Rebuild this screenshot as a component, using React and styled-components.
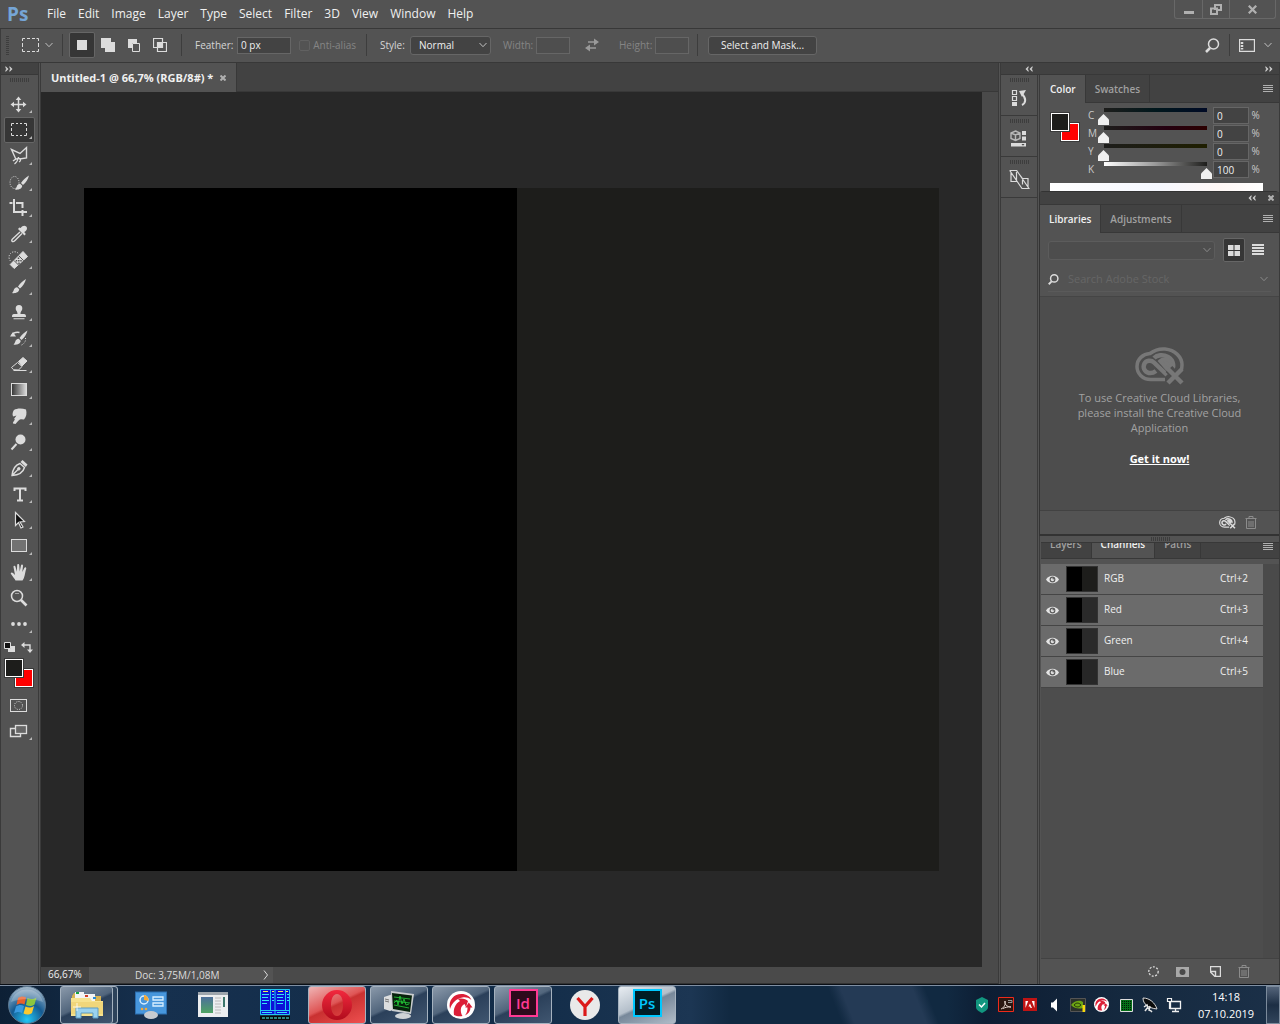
import React, { useState } from 'react';
import styled, { createGlobalStyle, css } from 'styled-components';

const GlobalStyle = createGlobalStyle`
    * {
        box-sizing: border-box;
    }

    body {
        margin: 0;
        background: #535353;
        color: #dcdcdc;
        font-family: "Open Sans", "Noto Sans", sans-serif;
        font-size: 10px;
        line-height: 14px;
    }

    button, input, select {
        margin: 0;
        padding: 0;
        border: 0;
        background: none;
        color: inherit;
        font: inherit;
    }

    svg {
        display: block;
        flex: none;
    }
`;

const Window = styled.div`
    display: flex;
    flex-direction: column;
    height: 100vh;
    overflow: hidden;
`;

/* ---------- menu bar ---------- */

const MenuBar = styled.header`
    display: flex;
    align-items: center;
    height: 29px;
    flex: none;
    padding-left: 7px;
    border-bottom: 1px solid #383838;
`;

const Logo = styled.div`
    width: 40px;
    color: #75a5d6;
    font-size: 19px;
    font-weight: 700;
    line-height: 24px;
`;

const Menu = styled.nav`
    display: flex;
    flex: 1;
    gap: 12px;
    font-size: 12px;
    color: #f0f0f0;
`;

const WindowControls = styled.div`
    display: flex;
    align-self: flex-start;
    height: 19px;
    margin-right: 4px;
    border: 1px solid #686868;
    border-top: 0;
    border-radius: 0 0 3px 3px;
`;

const WindowControl = styled.button`
    display: flex;
    align-items: center;
    justify-content: center;
    width: ${props => props.$wide ? 46 : 27}px;
    border-left: ${props => props.$first ? 0 : 1}px solid #686868;
`;

/* ---------- options bar ---------- */

const OptionsBar = styled.div`
    display: flex;
    align-items: center;
    height: 34px;
    flex: none;
    padding: 0 8px 1px 5px;
    border-left: 1px solid #3c3c3c;
    border-bottom: 1px solid #383838;
`;

const Grip = styled.div`
    flex: none;
    width: ${props => props.$vertical ? 3 : 19}px;
    height: ${props => props.$vertical ? 19 : 4}px;
    background: repeating-linear-gradient(
        ${props => props.$vertical ? '180deg' : '90deg'},
        #3d3d3d 0 1px, transparent 1px 2px
    );
`;

const ToolPreset = styled.button`
    display: flex;
    align-items: center;
    gap: 5px;
    margin: 0 9px;
`;

const Divider = styled.div`
    flex: none;
    width: 1px;
    height: 22px;
    margin-left: ${props => props.$gap || 0}px;
    background: #3d3d3d;
`;

const ModeGroup = styled.div`
    display: flex;
    margin: 0 8px 0 6px;
`;

const ModeButton = styled.button`
    display: flex;
    align-items: center;
    justify-content: center;
    width: 26px;
    height: 26px;
    flex: none;
    border-radius: 2px;
    ${props => props.$active && css`
        background: #363636;
        border: 1px solid #666;
    `}
`;

const Field = styled.label`
    display: flex;
    align-items: center;
    justify-content: space-between;
    flex: none;
    width: ${props => props.$width}px;
    margin-left: ${props => props.$gap || 13}px;
    color: ${props => props.$disabled ? '#858585' : '#d6d6d6'};
`;

const TextBox = styled.input`
    width: ${props => props.$width}px;
    height: 17px;
    padding: 0 3px;
    border: 1px solid #666;
    background: ${props => props.disabled ? '#4e4e4e' : '#434343'};
    color: #f0f0f0;
`;

const Checkbox = styled.input.attrs({ type: 'checkbox' })`
    appearance: none;
    width: 11px;
    height: 11px;
    border: 1px solid #616161;
    border-radius: 2px;
`;

const SelectBox = styled.span`
    display: flex;
    align-items: center;
    flex: none;
    width: ${props => props.$width}px;
    height: 19px;
    padding-right: 3px;
    border: 1px solid ${props => props.$dim ? '#5c5c5c' : '#666'};
    border-radius: 3px;
    background: ${props => props.$dim ? '#4d4d4d' : '#434343'};
    color: ${props => props.$dim ? '#858585' : '#f0f0f0'};
`;

const Select = styled.select`
    appearance: none;
    flex: 1;
    min-width: 0;
    padding-left: 8px;
    outline: 0;
`;

const SwapButton = styled.button`
    margin: 0 3px 0 15px;
`;

const MaskButton = styled.button`
    width: 109px;
    height: 19px;
    flex: none;
    margin-left: 10px;
    border: 1px solid #666;
    border-radius: 3px;
    background: #434343;
    color: #f0f0f0;
`;

const OptionsRight = styled.div`
    display: flex;
    align-items: center;
    gap: 9px;
    margin-left: auto;
`;

/* ---------- workspace ---------- */

const Workspace = styled.main`
    display: flex;
    flex: 1;
    min-height: 0;
`;

const Toolbox = styled.aside`
    display: flex;
    flex-direction: column;
    align-items: center;
    flex: none;
    width: 41px;
    border: solid #3a3a3a;
    border-width: 0 3px 0 1px;
    border-right-style: double;
`;

const CollapseBar = styled.div`
    display: flex;
    align-items: center;
    justify-content: space-between;
    width: 100%;
    height: 12px;
    flex: none;
    padding: 0 4px;
    border-bottom: 1px solid #383838;
    background: #424242;
`;

const ToolGrip = styled(Grip)`
    margin: 3px 0 9px;
`;

const ToolButton = styled.button`
    position: relative;
    display: flex;
    align-items: center;
    width: 31px;
    height: 26px;
    flex: none;
    padding-left: 2px;
    border: 1px solid ${props => props.$active ? '#666' : 'transparent'};
    border-radius: 2px;
    background: ${props => props.$active ? '#363636' : 'none'};

    &:after {
        content: '';
        position: absolute;
        right: 2px;
        bottom: 3px;
        border-left: 3px solid transparent;
        border-bottom: ${props => props.$single ? 0 : 3}px solid #b8b8b8;
    }
`;

const ColorMini = styled.div`
    display: flex;
    justify-content: space-between;
    width: 29px;
    margin: 5px 2px 0 0;
    flex: none;
`;

const ColorPair = styled.div`
    display: grid;
    grid-template: 10px 8px 10px / 10px 8px 10px;
    flex: none;
    margin: ${props => props.$margin || 0};
`;

const ColorWell = styled.button`
    border: 1px solid #fff;
    background: ${props => props.$color};
    outline: 1px solid #3a3a3a;
    grid-area: ${props => props.$back ? '2 / 2 / 4 / 4' : '1 / 1 / 3 / 3'};
`;

const Document = styled.section`
    display: flex;
    flex-direction: column;
    flex: 1;
    min-width: 0;
`;

const TabStrip = styled.div`
    display: flex;
    align-items: stretch;
    height: ${props => props.$height || 28}px;
    flex: none;
    background: #424242;
    border-bottom: 1px solid #383838;
`;

const Tab = styled.button`
    display: flex;
    align-items: center;
    padding: 0 9px;
    height: ${props => props.$active ? 'calc(100% + 1px)' : '100%'};
    border-right: 1px solid #383838;
    background: ${props => props.$active ? '#535353' : 'none'};
    color: ${props => props.$active ? '#f0f0f0' : '#a0a0a0'};
    font-weight: 600;
`;

const DocTab = styled(Tab)`
    justify-content: space-between;
    width: 196px;
    padding: 0 10px;
    font-size: 11px;
    font-weight: 700;
`;

const CanvasRow = styled.div`
    display: flex;
    flex: 1;
    min-height: 0;
`;

const Canvas = styled.div`
    display: flex;
    align-items: center;
    justify-content: center;
    flex: 1;
    min-width: 0;
    background: #282828;
`;

const Artwork = styled.div`
    width: 91%;
    max-width: 855px;
    aspect-ratio: 855 / 683;
    background: linear-gradient(90deg, #000 50.6%, #1d1d1b 50.6%);
`;

const ScrollTrack = styled.div`
    width: 16px;
    flex: none;
    background: #4a4a4a;
`;

const StatusBar = styled.footer`
    display: flex;
    height: 17px;
    flex: none;
    background: #4a4a4a;
    border-bottom: 1px solid #333;
`;

const Zoom = styled.div`
    width: 48px;
    padding-left: 7px;
    background: #434343;
    color: #f0f0f0;
`;

const DocInfo = styled.button`
    display: flex;
    align-items: center;
    justify-content: space-between;
    width: 184px;
    padding: 0 4px 0 46px;
    background: #535353;
`;

const SideDock = styled.aside`
    display: flex;
    flex-direction: column;
    flex: none;
    width: 282px;
    border: solid #3a3a3a;
    border-width: 0 1px 0 3px;
    border-left-style: double;
`;

const SideHeader = styled(CollapseBar)`
    padding: 0 6px 0 24px;
`;

const SideBody = styled.div`
    display: flex;
    flex: 1;
    min-height: 0;
`;

const IconStrip = styled.div`
    width: 39px;
    flex: none;
    border-right: 3px double #3a3a3a;
`;

const StripButton = styled.button`
    display: flex;
    flex-direction: column;
    align-items: center;
    gap: 5px;
    width: 100%;
    height: 41px;
    padding: 3px 0 0 1px;
    border-bottom: 1px solid #3a3a3a;
`;

const Panels = styled.div`
    display: flex;
    flex-direction: column;
    flex: 1;
    min-width: 0;
`;

const PanelMenu = styled.button`
    align-self: ${props => props.$top ? 'flex-start' : 'auto'};
    margin: 0 6px 0 auto;
`;

/* ---------- color panel ---------- */

const ColorPanel = styled.section`
    height: 116px;
    flex: none;
    margin-left: 1px;
    overflow: hidden;
`;

const ColorBody = styled.div`
    display: flex;
    align-items: flex-start;
    padding: 4px 0 0 10px;
`;

const Channels = styled.div`
    display: grid;
    grid-template-columns: 10px 115px 36px 12px;
    grid-auto-rows: 18px;
    margin-left: 9px;
`;

const ChannelName = styled.label`
    color: #c8c8c8;
    line-height: 16px;
`;

const InkSlider = styled.input.attrs({ type: 'range' })`
    appearance: none;
    width: 114px;
    height: 18px;
    background: ${props => props.$ramp} 6px 1px / 103px 4px no-repeat;

    &::-webkit-slider-thumb {
        appearance: none;
        width: 11px;
        height: 11px;
        margin-top: 7px;
        background: #f0f0f0;
        clip-path: polygon(50% 0, 100% 50%, 100% 100%, 0 100%, 0 50%);
    }
`;

const Spectrum = styled.div`
    height: 9px;
    margin: 4px 16px 0 9px;
    background: linear-gradient(90deg, #fff, #f6f8ff 50%, #fff8f6 80%, #fff);
`;

/* ---------- libraries panel ---------- */

const LibrariesPanel = styled.section`
    display: flex;
    flex-direction: column;
    height: 345px;
    flex: none;
    margin-left: -1px;
    border: 1px solid #333;
    border-right: 0;
    border-bottom: 2px solid #333;
    border-radius: 4px 4px 0 0;
    background: #4d4d4d;
`;

const FloatBar = styled.div`
    display: flex;
    align-items: center;
    justify-content: flex-end;
    gap: 12px;
    height: 13px;
    flex: none;
    padding-right: 5px;
    background: #424242;
    border-bottom: 1px solid #383838;
`;

const LibraryTools = styled.div`
    flex: none;
    height: 64px;
    padding: 5px 8px 0;
    background: #535353;
    border-bottom: 1px solid #454545;
`;

const ToolRow = styled.div`
    display: flex;
    align-items: center;
    gap: 2px;
`;

const LibrarySelect = styled(SelectBox)`
    margin-right: 6px;
`;

const ViewButton = styled(ModeButton)`
    width: 22px;
    height: 24px;
`;

const SearchRow = styled.label`
    display: flex;
    align-items: center;
    gap: 9px;
    height: 25px;
    margin-top: 5px;
    padding-right: 3px;
    border-bottom: 1px solid #5a5a5a;
`;

const SearchInput = styled.input`
    flex: 1;
    min-width: 0;
    font-size: 11px;
    outline: 0;

    &::placeholder {
        color: #666;
    }
`;

const EmptyState = styled.div`
    display: flex;
    flex-direction: column;
    align-items: center;
    flex: 1;
    padding-top: 50px;
    color: #a2a2a2;
    font-size: 11px;
    line-height: 15px;
    text-align: center;
`;

const EmptyText = styled.p`
    width: 170px;
    margin: 5px 0 16px;
`;

const GetLink = styled.a`
    color: #fff;
    font-weight: 700;
`;

const PanelFooter = styled.div`
    display: flex;
    align-items: center;
    justify-content: flex-end;
    gap: ${props => props.$gap}px;
    height: ${props => props.$height}px;
    flex: none;
    padding-right: ${props => props.$right}px;
    border-top: 1px solid #424242;
    background: #535353;
`;

const FooterButton = styled.button`
    display: flex;
    margin-left: ${props => props.$space || 0}px;
`;

/* ---------- channels panel ---------- */

const ChannelsPanel = styled.section`
    display: flex;
    flex-direction: column;
    flex: 1;
    min-height: 0;
    margin-left: 1px;
`;

const SplitGrip = styled.div`
    display: flex;
    justify-content: center;
    align-items: center;
    height: 7px;
    flex: none;
    border-bottom: 1px solid #383838;
`;

const ClippedTabs = styled.div`
    display: flex;
    align-items: flex-end;
    height: 16px;
    flex: none;
    overflow: hidden;
    background: #424242;
    border-bottom: 1px solid #383838;
`;

const ClippedTab = styled(Tab)`
    height: 28px;
    flex: none;
`;

const ChannelArea = styled.div`
    flex: 1;
    margin-top: 5px;
    padding-right: 16px;
    background: linear-gradient(90deg, transparent calc(100% - 16px), #4a4a4a calc(100% - 16px)), #4d4d4d;
`;

const ChannelList = styled.ul`
    margin: 0;
    padding: 0;
    list-style: none;
`;

const ChannelRow = styled.li`
    display: flex;
    align-items: center;
    height: 31px;
    padding: 0 15px 0 5px;
    border-bottom: 1px solid #454545;
    background: #6b6b6b;
    color: #f0f0f0;
`;

const Thumb = styled.div`
    width: 32px;
    height: 26px;
    margin: 0 6px 0 7px;
    border: 1px solid #333;
    background: linear-gradient(90deg, #000 50%, ${props => props.$tone} 50%);
`;

const RowText = styled.span`
    padding-bottom: 3px;
    margin-left: ${props => props.$end ? 'auto' : 0};
`;

/* ---------- taskbar ---------- */

const Taskbar = styled.footer`
    display: flex;
    align-items: center;
    flex: none;
    height: 40px;
    border-top: 1px solid #0a0f16;
    box-shadow: inset 0 1px #7f8fa3;
    background:
        linear-gradient(68deg, transparent 65%, #22385344 65.3%, #243a55 66%, #243a55 71.5%, transparent 72.5%),
        linear-gradient(90deg, #0d2035, #16304e 12%, #122c48 40%, #1c3653 54%, #112941 57%, #112941 74%, #0d1d33 77%, #15293f 88%, #1b3048);
`;

const StartButton = styled.button`
    margin: 0 14px 0 8px;
`;

const taskStates = {
    idle: 'none',
    open: 'linear-gradient(155deg, #8a99aa, #51657c 45%, #2b405a 50%, #405670)',
    alert: 'linear-gradient(155deg, #efb5b5, #df5555 45%, #c93131 50%, #ef5050)',
    active: 'linear-gradient(155deg, #e8edf2, #b4bfca 45%, #77889a 50%, #b0bcc8)',
};

const TaskButton = styled.button`
    display: flex;
    align-items: center;
    justify-content: center;
    width: 58px;
    height: 38px;
    flex: none;
    margin-right: 4px;
    border: 1px solid ${props => props.$state === 'idle' ? 'transparent' : '#a5b2bf'};
    border-radius: 3px;
    background: ${props => taskStates[props.$state]};
    ${props => props.$stacked && css`
        box-shadow: inset -4px 0 #2d435b, inset -5px 0 #a5b2bf;
        padding-right: 5px;
    `}
`;

const Tray = styled.div`
    display: flex;
    align-items: center;
    gap: 8px;
    margin-left: auto;
`;

const Clock = styled.time`
    width: 64px;
    margin-left: 4px;
    color: #fff;
    font-size: 11px;
    line-height: 17px;
    text-align: center;
`;

const ShowDesktop = styled.button`
    width: 14px;
    height: 38px;
    border: 1px solid #7b8a9b;
    background: linear-gradient(#54647a, #1c2e44 50%, #31445b);
`;

/* ---------- icons ---------- */

const Icon = ({ size = 16, w, h, box, children, ...rest }) => (
    <svg
        width={w || size}
        height={h || size}
        viewBox={box || `0 0 ${w || size} ${h || size}`}
        fill="none"
        stroke="#dcdcdc"
        aria-hidden="true"
        {...rest}
    >
        {children}
    </svg>
);

const Chevron = ({ color = '#c0c0c0' }) => (
    <Icon w={8} h={6} stroke={color}><path d="M.5 1 4 4.7 7.5 1" /></Icon>
);

const DoubleArrow = ({ left }) => (
    <Icon w={8} h={6} stroke="none" fill="#d0d0d0">
        <path d={left ? 'M3.500 0v2L2.500 3l1 1v2L.5 3zM7.500 0v2L6.500 3l1 1v2l-3-3z' : 'M.5 0v2l1 1-1 1v2l3-3zM4.500 0v2l1 1-1 1v2l3-3z'} />
    </Icon>
);

const Burger = () => (
    <Icon w={10} h={8} stroke="#b0b0b0"><path d="M0 .5h10M0 2.500h10M0 4.500h10M0 6.500h10" /></Icon>
);

const Cross = ({ size = 6, width = 2, color = '#b0b0b0' }) => (
    <Icon size={size} box="0 0 6 6" stroke={color} strokeWidth={width}><path d="M.5.5l5 5M5.500.5l-5 5" /></Icon>
);

const Magnifier = ({ size = 15 }) => (
    <Icon size={size} box="0 0 15 15" strokeWidth={size > 12 ? 1.5 : 2}>
        <circle cx="8.500" cy="6" r="5" /><path d="M5 10 1 14" strokeWidth="2.500" />
    </Icon>
);

const Trash = () => (
    <Icon w={12} h={13} stroke="#8c8c8c">
        <path d="M.5 2.500h11M4 2V.5h4V2M1.500 3v9.500h9V3M4 5v6M6 5v6M8 5v6" />
    </Icon>
);

const CloudShape = ({ size, color, bg }) => (
    <Icon w={size} h={Math.round(size * 0.76)} box="0 0 50 38" stroke={color} strokeWidth="3.500">
        <path d="M16 32.500C7 32.500 2 26 2 19.500 2 12 8 7 15 6.500 19 3.500 24 1.500 30 2c10 1 17 8 17 16 0 5-2 9-5 11M16 32.500h14" />
        <path d="M32 28 19 15.500c-3-3-8-2-9.500 1-2 4 0 8.500 4.500 9.500 3 .5 5-.5 7-2M19 11c3-3 9-4 14-1 6 3.500 7 11 2 15" strokeWidth="4.500" />
        <path d="M25 14c3-3 8-2 10 1 2 4 0 7-3 7z" fill={color} />
        <path d="M34 22l12 13M46 22 34 35" stroke={bg} strokeWidth="9" />
        <path d="M33 22l14 14M47 22 33 36" strokeWidth="4.500" />
    </Icon>
);

const Eye = () => (
    <Icon w={13} h={9} stroke="none">
        <path d="M0 4.500C3-.5 10-.5 13 4.500 10 9.500 3 9.500 0 4.500z" fill="#e4e4e4" />
        <circle cx="6.500" cy="4.500" r="2.900" fill="#5a5a5a" />
        <circle cx="6.500" cy="4.500" r="1.700" fill="#e4e4e4" />
        <circle cx="7.200" cy="3.700" r=".8" fill="#555" />
    </Icon>
);

const brushShape = (
    <path d="M20.500 4.500c-3 1.500-6 4.500-8 7.500l2 2c3-2.500 5-5.500 6-9.500zM11.700 12.800c-2 .2-3 1.200-3.500 3-.3 1.300-1 2-1.700 2.700 3 .8 7-.5 7.200-3.700z" fill="#dcdcdc" stroke="none" />
);

const tools = [
    { name: 'Move', art: (
        <>
            <path d="M11.500 7v11M6 12.500h11" strokeWidth="1.500" />
            <path d="M11.500 4.500 14.300 8H8.700zM11.500 20.500 8.700 17h5.600zM3.500 12.500 7 9.700v5.600zM19.500 12.500 16 9.700v5.600z" fill="#dcdcdc" stroke="none" />
        </>
    ) },
    { name: 'Rectangular Marquee', art: <path d="M4.500 8V5.500H7M9 5.500h2M13 5.500h2M17 5.500h2.500V8M19.500 10v3M19.500 15v2.500H17M15 17.500h-2M11 17.500H9M7 17.500H4.500V15M4.500 13v-3" /> },
    { name: 'Polygonal Lasso', art: (
        <>
            <path d="M9 15.500 4.500 5.500l8.500 4 6.500-6V14l-7 1" strokeWidth="1.400" />
            <path d="M12 18c2-1 2-3 .3-3.600C10.500 14 8 15 6 17M11.500 13c-.5 3-2 5.500-4 7" strokeWidth="1.300" />
        </>
    ) },
    { name: 'Quick Selection', art: (
        <>
            <ellipse cx="7.500" cy="12.500" rx="4.500" ry="6" strokeDasharray="1 1.300" />
            <g transform="translate(1.500 1)">{brushShape}</g>
        </>
    ) },
    { name: 'Crop', art: <path d="M7 3v13h7.500M16.500 16H20M2.500 7h3M9 7h6.500v5M15.500 14v6" strokeWidth="2" /> },
    { name: 'Eyedropper', art: (
        <>
            <path d="m13 10-7.500 7c-1 1-1 2 0 2.500 1 .5 1.500 0 2.500-1l7-7" strokeWidth="1.400" />
            <path d="m11 7 6.500 6.500 1.300-1.500-1.600-2c3-1.500 3.500-4 2-5.500s-4-1-5.500 1.500l-1.400-.6z" fill="#dcdcdc" stroke="none" />
        </>
    ) },
    { name: 'Spot Healing Brush', art: (
        <>
            <path d="M3.500 13a5 5 0 0 1 8-7.500" strokeDasharray="1.200 1.300" />
            <path d="m3.200 16.500 4 4L20.500 8.500l-4.500-5z" fill="#dcdcdc" strokeLinejoin="round" strokeWidth="1" />
            <path d="m7 12.500 5 5M11.700 7.700l5 5" stroke="#535353" strokeWidth="1" />
            <path d="M11.500 9.500v1.500M14 12v1.500M9.500 12v1.500M12 14.500V16M11.800 12v1.500" stroke="#535353" strokeWidth="1.500" />
        </>
    ) },
    { name: 'Brush', art: <g transform="translate(-1.500 .5)">{brushShape}</g> },
    { name: 'Clone Stamp', art: <path d="M12 5a3.400 3.400 0 0 0-3.300 3.500c0 2.500 1.800 2.500 1.800 5.500H7c-1.500 0-2 .8-2 3h14c0-2.200-.5-3-2-3h-3.500c0-3 1.800-3 1.800-5.500A3.400 3.400 0 0 0 12 5zM6.500 18.300h11v1h-11z" fill="#dcdcdc" stroke="none" /> },
    { name: 'History Brush', art: (
        <>
            <path d="M5 9c2-3 5-3 7.500-2.500" strokeWidth="1.500" />
            <path d="M3 10.500 6 6l3 4.500z" fill="#dcdcdc" stroke="none" />
            {brushShape}
            <path d="M18.500 12c.5 3-1 5.500-4 7" strokeDasharray="1 1.500" />
        </>
    ) },
    { name: 'Eraser', art: (
        <>
            <path d="M11.500 9.500 16 5.500l4 3.500-5 5z" fill="#dcdcdc" />
            <path d="m10.500 10.500 4.500 4-3.500 3.500-5-.3-2-2.200zM6.500 18.500h13" />
        </>
    ) },
    { name: 'Gradient', art: <rect x="4.500" y="5.500" width="15" height="12" fill="url(#toolRamp)" /> },
    { name: 'Smudge', art: <path d="M7 6c3-2 8-2 12-.5 1 4 .5 7-2 10l-3-.3c-1.500 0-3 2-5.500 4.800l-2.500-.5c-.5-1 1-2.500 2-4l-1-.5 2.500-3.500-3 1c-1.500-1-1-4.500.5-6.500z" fill="#dcdcdc" stroke="none" /> },
    { name: 'Dodge', art: (
        <>
            <path d="m9.500 14-5 5.500" strokeWidth="2" />
            <circle cx="13.500" cy="9.500" r="5" fill="#dcdcdc" stroke="none" />
        </>
    ) },
    { name: 'Pen', art: (
        <>
            <path d="M5 19.500C5.500 14 7 9.500 13 7.500l4.500 4c-1.500 5.500-5.500 7.500-12.500 8zM5 19.500l6-6" strokeWidth="1.400" />
            <circle cx="11.800" cy="12.800" r="1.300" fill="#dcdcdc" />
            <path d="m13.500 6 2-2 5 4.500-1.700 2.500z" fill="#dcdcdc" stroke="none" />
        </>
    ) },
    { name: 'Type', art: <path d="M7.500 9V6.500h11V9M13 6.500v12M10 18.500h6" strokeWidth="2" /> },
    { name: 'Path Selection', art: <path d="m8.500 4.500 9 9-4.500.5 3 5-2 1-2.500-5.500-3 3z" fill="#111" strokeWidth="1.200" /> },
    { name: 'Rectangle', art: <rect x="4.500" y="5.500" width="15" height="12" fill="#727272" /> },
    { name: 'Hand', art: <path d="M8.500 20.500c-1-2-2.500-3.500-4.500-6.500-.8-1.300.7-2.300 2-1l2 2-1.500-8c-.2-1.500 1.600-1.800 2-.3l1.300 5L10.200 5c0-1.500 2-1.500 2 0l.5 6.500L14 5.500c.3-1.500 2.200-1 2 .5l-.7 6 2-4c.7-1.300 2.300-.7 1.900.8C17.700 14 18 17 15.500 20.500z" fill="#dcdcdc" stroke="none" /> },
    { name: 'Zoom', single: true, art: (
        <>
            <circle cx="10" cy="10" r="5.500" strokeWidth="1.500" />
            <path d="m14 14 5.500 5.500" strokeWidth="2.600" />
            <path d="M8 7.500h4" strokeOpacity=".6" />
        </>
    ) },
    { name: 'Edit Toolbar', art: (
        <g fill="#dcdcdc" stroke="none">
            <circle cx="6" cy="12" r="1.900" /><circle cx="12" cy="12" r="1.900" /><circle cx="18" cy="12" r="1.900" />
        </g>
    ) },
];

const stripIcons = [
    { name: 'History', art: (
        <>
            <path d="M3.500 3.500h4v4h-4zM3.500 9.500h4v4h-4z" strokeWidth="1.200" />
            <path d="M3 15h5v4H3z" fill="#dcdcdc" stroke="none" />
            <path d="M13 18c4-2 4.500-7 0-11" strokeWidth="2" />
            <path d="m10 4 7-1-4 7z" fill="#dcdcdc" stroke="none" />
        </>
    ) },
    { name: 'Properties', art: (
        <>
            <path d="m6.500 3 4.500 2v5.500l-4.500 2-4.500-2V5zM2 5l4.500 2L11 5M6.500 7v5.500" stroke="#b8b8b8" strokeWidth="1.400" />
            <path d="M13 3h4v4h-4zM13 8.500h4v4h-4zM2 15h15v3.500H2z" fill="#dcdcdc" stroke="none" />
            <path d="M12.500 16h3L14 17.700z" fill="#444" stroke="none" />
        </>
    ) },
    { name: 'Align', art: <path d="M.7 1.500h7L20 19.500h-7L.7 1.500M2 4v8.500h5.500V3M13.500 9.500v6M13.500 9.500H19v9M7.500 1.500l6 8" strokeWidth="1.200" /> },
];

const menuItems = ['File', 'Edit', 'Image', 'Layer', 'Type', 'Select', 'Filter', '3D', 'View', 'Window', 'Help'];

const inks = [
    { name: 'C', value: 0, ramp: 'linear-gradient(90deg, #1d1d1b, #00171c 50%, #000a25)' },
    { name: 'M', value: 0, ramp: 'linear-gradient(90deg, #1d1d1b, #240010 60%, #2b0000)' },
    { name: 'Y', value: 0, ramp: 'linear-gradient(90deg, #1d1d1b, #1e1e00)' },
    { name: 'K', value: 100, ramp: 'linear-gradient(90deg, #fff, #999 50%, #1d1d1b)' },
];

const channels = [
    { name: 'RGB', key: 'Ctrl+2', tone: '#1d1d1b' },
    { name: 'Red', key: 'Ctrl+3', tone: '#2a2a2a' },
    { name: 'Green', key: 'Ctrl+4', tone: '#2a2a2a' },
    { name: 'Blue', key: 'Ctrl+5', tone: '#272727' },
];

const AdobeTile = styled.span`
    display: flex;
    align-items: center;
    justify-content: center;
    width: 29px;
    height: 28px;
    margin-bottom: 4px;
    border: 2px solid ${props => props.$color};
    background: ${props => props.$fill};
    color: ${props => props.$color};
    font-size: 15px;
    font-weight: 600;
`;

const RedSwirl = ({ size }) => (
    <Icon size={size} box="0 0 28 28" stroke="none">
        <circle cx="14" cy="14" r="14" fill="#fff" />
        <path d="M3 18C1 9 7 3 14.500 3c5 0 8.500 2.500 10 6-3-2.500-6-3-9-2.500C9 7.500 5 12 3 18z" fill="#dc1f38" />
        <path d="M7 24c-1-6 1-11 6-14l-2-2c4-1 8 0 10 2l-2 6-1.500-3C13 15 13 21 15.500 25c-3 .7-6 .3-8.500-1z" fill="#dc1f38" />
        <path d="M18 24.500c2-2.500 2.500-5 2.500-8h-2.200l3.500-5 3.700 5h-2c0 3.500-2 6.500-5.500 8z" fill="#dc1f38" />
    </Icon>
);

const taskIcons = [
    { name: 'Explorer', state: 'open', stacked: true, art: (
        <Icon w={34} h={32} stroke="none">
            <path d="M2 7 4 4h8l2 3h17v20H2z" fill="#d9b451" />
            <path d="M5 3h9v7H5zM13 5h12v7H13z" fill="#f4f4f4" />
            <path d="M6 3h3v2H6z" fill="#14a343" /><path d="M15 6h3v2h-3z" fill="#d33d26" /><path d="M23 8h3v2h-3z" fill="#2a8ad3" />
            <path d="M1 9h19l2 3h11v15H1z" fill="#f6e28e" />
            <path d="M1 13h32v12H1z" fill="#f0d67a" />
            <path d="M6 29V19h22v10h-5v-5H11v5z" fill="#9ad2ef" stroke="#5d9cc4" />
            <path d="M7 14v8M3 18h8" stroke="#fff" strokeOpacity=".8" />
        </Icon>
    ) },
    { name: 'Control Panel', state: 'idle', art: (
        <Icon w={32} h={28} stroke="none">
            <rect x=".5" y="1" width="31" height="22" fill="#4796dc" stroke="#2d6eae" />
            <circle cx="9" cy="9" r="4" stroke="#d9efff" strokeWidth="1.500" />
            <path d="M9 9V4a5 5 0 0 1 4.500 6z" fill="#f3a93a" />
            <path d="M18 6h10v3H18zM18 12h10v3H18z" fill="#4796dc" stroke="#d9efff" strokeWidth="1.300" />
            <circle cx="7" cy="18" r="1.300" fill="#f3a93a" /><circle cx="11" cy="18" r="1.300" fill="#f3a93a" />
            <ellipse cx="16" cy="24" rx="7" ry="4" fill="#c7cbd0" />
        </Icon>
    ) },
    { name: 'Viewer', state: 'idle', art: (
        <Icon w={30} h={26} stroke="none">
            <path d="M0 0h30v25H0z" fill="#eceef0" /><path d="M0 0h30v3H0z" fill="#9da5ad" />
            <path d="M3 5h12v16H3z" fill="url(#photo)" />
            <path d="M17 6h6M17 9h6M17 12h6M17 15h6M17 18h6M17 21h6" stroke="#bababa" />
            <path d="M25 5h2v10h-2z" fill="#3c776c" />
        </Icon>
    ) },
    { name: 'Commander', state: 'idle', art: (
        <Icon w={30} h={31} stroke="none">
            <path d="M0 0h30v26H0z" fill="#0c10d8" />
            <path d="M.5.5h29v25H.5zM15 0v26M0 21.500h30M10.500 1v20M25.500 1v20" stroke="#22c8ee" />
            <path d="M2 5.500h7M2 8.500h6M2 11.500h7M2 14.500h5M12 5.500h2M12 8.500h2M12 11.500h2M17 5.500h7M17 8.500h6M17 11.500h7M17 14.500h6M27 5.500h2M27 8.500h2M27 11.500h2M2 23.500h10M17 23.500h10" stroke="#35e4f5" />
            <path d="M3 2.500h5M18 2.500h5M26 2.500h2M12 2.500h2" stroke="#f0ef56" />
            <path d="M0 27h30v4H0z" fill="#09090c" /><path d="M2 29h28" stroke="#2c8780" strokeWidth="2" strokeDasharray="3 1" />
        </Icon>
    ) },
    { name: 'Opera', state: 'alert', art: (
        <Icon size={30} stroke="none">
            <path fillRule="evenodd" d="M15 0a15 15 0 1 0 0 30 15 15 0 0 0 0-30zm0 4c4 0 6 5 6 11s-2 11-6 11-6-5-6-11 2-11 6-11z" fill="url(#opera)" />
        </Icon>
    ) },
    { name: 'Monitor', state: 'open', art: (
        <Icon w={30} h={28} stroke="none">
            <path d="m0 6 9-3v16l-3 1-6-2z" fill="#dcdedf" /><path d="M1 8l4 1M1 10l4 1" stroke="#777" />
            <path d="m7 0 23 3-3 20-19-3z" fill="#c9ccce" />
            <path d="m8 2 20 2.500L26 21 9 18z" fill="#07220c" />
            <path d="m10 12 3-3 1 5 2-9 2 8 2-5 2 6 3-1M10 6l16 2M10 10l16 2M10 14l15 3" stroke="#25d23a" strokeWidth=".8" />
            <ellipse cx="19" cy="25" rx="8" ry="3" fill="#cfd3d6" />
        </Icon>
    ) },
    { name: 'Launcher', state: 'open', art: <RedSwirl size={28} /> },
    { name: 'InDesign', state: 'open', art: <AdobeTile $color="#ff3a93" $fill="#2e0a1c">Id</AdobeTile> },
    { name: 'Browser', state: 'idle', art: (
        <Icon size={30} stroke="none">
            <circle cx="15" cy="15" r="15" fill="#e9e9e9" />
            <path d="m7.500 8 7.500 8.500L22.500 8M15 16v10" stroke="#dc1a1a" strokeWidth="3.200" />
        </Icon>
    ) },
    { name: 'Photoshop', state: 'active', art: <AdobeTile $color="#00c8ff" $fill="#001d26">Ps</AdobeTile> },
];

const trayIcons = [
    { name: 'Shield', art: (
        <><path d="m8 0 6 3v7c0 3-3 4.500-6 6-3-1.500-6-3-6-6V3z" fill="#12967f" stroke="none" /><path d="m5 7.500 2.500 2.500L11 6" stroke="#fff" strokeWidth="1.500" /></>
    ) },
    { name: 'Acrobat', art: (
        <><path d="M.5.5h15v14H.5z" fill="#2a1712" stroke="#ee2a1a" /><path d="M3 12c3-1 5-5 4-8-1 3 2 6 6 6-3-.5-6 .5-8 1.500" stroke="#e4d6d0" /><path d="M10 3.500h4v2h-4" stroke="#999" /></>
    ) },
    { name: 'Adobe', art: (
        <><path d="M1 1h14v13H1z" fill="#c01414" stroke="none" /><path d="M3.500 11V4h2.700zM12.500 11V4H9.800zM8 6.500l2 4.500H8.500L8 9.500H6.500z" fill="#fff" stroke="none" /></>
    ) },
    { name: 'Volume', art: <path d="M5 5.500h2L11 1.500v13L7 10.500H5z" fill="#fff" stroke="none" /> },
    { name: 'Graphics', art: (
        <><path d="M.5 1.500h15v13H.5z" fill="#2b302c" stroke="#555" /><path d="M1 8c4-5 9-5 12-3v6C9 12 5 12 1 8z" fill="#6da514" stroke="none" /><path d="M4 8c2-2.500 5-2.500 7 0-2 2.500-5 2.500-7 0z" stroke="#213008" /><path d="M12.500 8h2.500v7h-2.500z" fill="#f5d90d" stroke="none" /></>
    ) },
    { name: 'Launcher', art: <g><RedSwirl size={15} /></g> },
    { name: 'Task load', art: (
        <><path d="M2.500 2.500h12v12h-12z" fill="#056f17" stroke="#ddd" /><path d="M4 4.500h9M4 6.500h9M4 8.500h9M4 10.500h9M4 12.500h9" stroke="#021b06" strokeDasharray="1 1" /></>
    ) },
    { name: 'Satellite', art: (
        <><path d="M1 1c0 6 5 10 14 11C13 6 8 1 1 1z" fill="#0b0b0b" stroke="#d8d8d8" /><path d="m2 10 3-2 1 3 4 4M3 14l3-4M8 9l-1 5" stroke="#e6e6e6" strokeWidth="1.500" /></>
    ) },
    { name: 'Network', art: (
        <><path d="M4.500 4.500h10v7h-10zM9.500 12v2.500M6 14.500h7" stroke="#f0f0f0" strokeWidth="1.300" /><path d="M1.500 1.500h4v3h-4zM3.500 5v7" fill="#15293f" stroke="#f0f0f0" strokeWidth="1.200" /></>
    ) },
];

const PaintSheet = styled.svg`
    position: absolute;
    width: 0;
    height: 0;
`;

function SharedPaints() {
    return (
        <PaintSheet aria-hidden="true">
            <defs>
                <linearGradient id="toolRamp"><stop stopColor="#333" /><stop offset="1" stopColor="#ddd" /></linearGradient>
                <linearGradient id="photo" x2="0" y2="1"><stop stopColor="#4d6f9c" /><stop offset="1" stopColor="#4fa463" /></linearGradient>
                <linearGradient id="opera" x2="0" y2="1"><stop stopColor="#f2293e" /><stop offset="1" stopColor="#b00c1c" /></linearGradient>
                <radialGradient id="orb" cy=".9" r=".9"><stop stopColor="#22c7f5" /><stop offset=".5" stopColor="#155b92" /><stop offset="1" stopColor="#a9bccd" /></radialGradient>
            </defs>
        </PaintSheet>
    );
}

function ColorSliders() {
    const [values, setValues] = useState(inks.map(ink => ink.value));
    const change = (index, value) => setValues(values.map((v, i) => (i === index ? Number(value) || 0 : v)));

    return (
        <Channels>
            {inks.map((ink, i) => (
                <React.Fragment key={ink.name}>
                    <ChannelName htmlFor={`ink${ink.name}`}>{ink.name}</ChannelName>
                    <InkSlider id={`ink${ink.name}`} $ramp={ink.ramp} value={values[i]} onChange={e => change(i, e.target.value)} />
                    <TextBox $width={36} aria-label={`${ink.name} value`} value={values[i]} onChange={e => change(i, e.target.value)} />
                    <ChannelName as="span">&nbsp;%</ChannelName>
                </React.Fragment>
            ))}
        </Channels>
    );
}

function Options() {
    return (
        <OptionsBar>
            <Grip $vertical />
            <ToolPreset aria-label="Tool preset">
                <Icon w={22} h={14}><path d="M4.500 3V.5H7M9 .5h3M14 .5h3M18.500.5h2V3M20.500 5v4M20.500 11v2.500h-2M17 13.500h-3M12 13.500H9M7 13.500H4.500V11M4.500 9V5" /></Icon>
                <Chevron />
            </ToolPreset>
            <Divider />
            <ModeGroup>
                <ModeButton $active aria-label="New selection"><Icon w={10} h={10} fill="#dcdcdc" stroke="none"><path d="M0 0h10v10H0z" /></Icon></ModeButton>
                <ModeButton aria-label="Add to selection"><Icon size={14} fill="#dcdcdc" stroke="none"><path d="M0 0h10v4h4v10H4v-4H0z" /></Icon></ModeButton>
                <ModeButton aria-label="Subtract from selection"><Icon w={12} h={13} fill="#dcdcdc"><path d="M0 0h9v4H4v5H0z" stroke="none" /><path d="M4.500 4.500h7v8h-7z" fill="none" /></Icon></ModeButton>
                <ModeButton aria-label="Intersect with selection"><Icon size={14}><path d="M.5.5h9v9h-9zM4.500 4.500h9v9h-9z" strokeWidth="1.200" /><path d="M4 4h6v6H4z" fill="#dcdcdc" stroke="none" /></Icon></ModeButton>
            </ModeGroup>
            <Divider />
            <Field $width={96}>Feather:<TextBox $width={54} defaultValue="0 px" /></Field>
            <Field $width={57} $gap={8} $disabled><Checkbox disabled />Anti-alias</Field>
            <Divider $gap={10} />
            <Field $width={111}>
                Style:
                <SelectBox $width={81}>
                    <Select defaultValue="Normal"><option>Normal</option><option>Fixed Ratio</option></Select>
                    <Chevron />
                </SelectBox>
            </Field>
            <Field $width={67} $gap={12} $disabled>Width:<TextBox $width={34} disabled /></Field>
            <SwapButton aria-label="Swap width and height">
                <Icon w={14} h={14} stroke="#9a9a9a" strokeWidth="1.500">
                    <path d="M3 4h8M3 10h8" /><path d="m9 .5 5 3.500-5 3.500zM5 6.500 0 10l5 3.500z" fill="#9a9a9a" stroke="none" />
                </Icon>
            </SwapButton>
            <Field $width={70} $gap={17} $disabled>Height:<TextBox $width={34} disabled /></Field>
            <Divider $gap={8} />
            <MaskButton>Select and Mask...</MaskButton>
            <OptionsRight>
                <Magnifier size={15} />
                <Divider />
                <Icon w={16} h={13}><path d="M.5.5h15v12H.5z" strokeWidth="1.300" /><path d="M3 3v7.500" strokeWidth="2.500" strokeDasharray="2 1" /></Icon>
                <Chevron />
            </OptionsRight>
        </OptionsBar>
    );
}

function Tools() {
    const [active, setActive] = useState('Rectangular Marquee');

    return (
        <Toolbox>
            <CollapseBar><DoubleArrow /></CollapseBar>
            <ToolGrip />
            {tools.map(tool => (
                <ToolButton key={tool.name} aria-label={tool.name} $active={tool.name === active} $single={tool.single} onClick={() => setActive(tool.name)}>
                    <Icon size={24}>{tool.art}</Icon>
                </ToolButton>
            ))}
            <ColorMini>
                <Icon w={12} h={11}><path d="M4 4h7v6H4z" fill="#dcdcdc" stroke="none" /><path d="M.5.5h6v6h-6z" fill="#111" /></Icon>
                <Icon w={12} h={11} strokeWidth="1.400"><path d="M3 3h6v6" /><path d="M3.500 0v6L0 3zM6 7.500h6L9 11z" fill="#dcdcdc" stroke="none" /></Icon>
            </ColorMini>
            <ColorPair $margin="6px 1px 5px 0">
                <ColorWell $back $color="#f00" aria-label="Background color" />
                <ColorWell $color="#1d1d1b" aria-label="Foreground color" />
            </ColorPair>
            <ToolButton $single aria-label="Quick mask">
                <Icon size={24}><rect x="3.500" y="6.500" width="16" height="12" /><circle cx="11.500" cy="12.500" r="4" strokeDasharray="1 1.300" /></Icon>
            </ToolButton>
            <ToolButton aria-label="Screen mode">
                <Icon size={24}><path d="M8 9.500H3.500v8h10v-3" strokeWidth="1.400" /><rect x="8.500" y="6.500" width="11" height="8" fill="#666" strokeWidth="1.300" /></Icon>
            </ToolButton>
        </Toolbox>
    );
}

function Libraries() {
    return (
        <LibrariesPanel>
            <FloatBar><DoubleArrow left /><Cross /></FloatBar>
            <TabStrip>
                <Tab $active>Libraries</Tab>
                <Tab>Adjustments</Tab>
                <PanelMenu aria-label="Libraries menu"><Burger /></PanelMenu>
            </TabStrip>
            <LibraryTools>
                <ToolRow>
                    <LibrarySelect $width={167} $dim><Select aria-label="Library" /><Chevron color="#8a8a8a" /></LibrarySelect>
                    <ViewButton $active aria-label="Grid view"><Icon w={12} h={11} fill="#dcdcdc" stroke="none"><path d="M0 0h5.500v5H0zM6.500 0H12v5H6.500zM0 6h5.500v5H0zM6.500 6H12v5H6.500z" /></Icon></ViewButton>
                    <ViewButton aria-label="List view"><Icon w={12} h={12} strokeWidth="2"><path d="M0 1h12M0 4h12M0 7h12M0 10h12" /></Icon></ViewButton>
                </ToolRow>
                <SearchRow>
                    <Magnifier size={11} />
                    <SearchInput aria-label="Search Adobe Stock" placeholder="Search Adobe Stock" />
                    <Chevron color="#8a8a8a" />
                </SearchRow>
            </LibraryTools>
            <EmptyState>
                <CloudShape size={50} color="#777" bg="#4d4d4d" />
                <EmptyText>To use Creative Cloud Libraries, please install the Creative Cloud Application</EmptyText>
                <GetLink href="#get">Get it now!</GetLink>
            </EmptyState>
            <PanelFooter $height={24} $gap={9} $right={22}>
                <FooterButton aria-label="Sync status"><CloudShape size={17} color="#dcdcdc" bg="#535353" /></FooterButton>
                <FooterButton aria-label="Delete"><Trash /></FooterButton>
            </PanelFooter>
        </LibrariesPanel>
    );
}

function ChannelsDock() {
    return (
        <ChannelsPanel>
            <SplitGrip><Grip /></SplitGrip>
            <ClippedTabs>
                <ClippedTab>Layers</ClippedTab>
                <ClippedTab $active>Channels</ClippedTab>
                <ClippedTab>Paths</ClippedTab>
                <PanelMenu $top aria-label="Channels menu"><Burger /></PanelMenu>
            </ClippedTabs>
            <ChannelArea>
                <ChannelList>
                    {channels.map(channel => (
                        <ChannelRow key={channel.name}>
                            <FooterButton aria-label={`Toggle ${channel.name}`}><Eye /></FooterButton>
                            <Thumb $tone={channel.tone} />
                            <RowText>{channel.name}</RowText>
                            <RowText $end>{channel.key}</RowText>
                        </ChannelRow>
                    ))}
                </ChannelList>
            </ChannelArea>
            <PanelFooter $height={26} $gap={17} $right={29}>
                <FooterButton aria-label="Load as selection"><Icon size={11}><circle cx="5.500" cy="5.500" r="4.700" strokeDasharray="2 1.500" strokeWidth="1.300" /></Icon></FooterButton>
                <FooterButton aria-label="Save as channel"><Icon w={13} h={10} stroke="none"><path d="M0 0h13v10H0z" fill="#a8a8a8" /><circle cx="6.500" cy="5" r="3" fill="#4a4a4a" /></Icon></FooterButton>
                <FooterButton $space={4} aria-label="New channel"><Icon size={11}><path d="M.5 6V.5h10v10H5z" strokeWidth="1.400" /><path d="M0 5.500h5.500V11" strokeWidth="1.400" /></Icon></FooterButton>
                <FooterButton aria-label="Delete channel"><Trash /></FooterButton>
            </PanelFooter>
        </ChannelsPanel>
    );
}

export default function App() {
    return (
        <Window>
            <GlobalStyle />
            <SharedPaints />
            <MenuBar>
                <Logo>Ps</Logo>
                <Menu>
                    {menuItems.map(item => <button key={item}>{item}</button>)}
                </Menu>
                <WindowControls>
                    <WindowControl $first aria-label="Minimize"><Icon w={10} h={12} stroke="#b0b0b0" strokeWidth="3"><path d="M0 9.500h10" /></Icon></WindowControl>
                    <WindowControl aria-label="Restore"><Icon w={12} h={11} stroke="#b0b0b0" strokeWidth="2"><path d="M5 6V1h6v5H8M1 4.500h6V10H1z" /></Icon></WindowControl>
                    <WindowControl $wide aria-label="Close"><Cross size={9} width={1.5} /></WindowControl>
                </WindowControls>
            </MenuBar>
            <Options />
            <Workspace>
                <Tools />
                <Document>
                    <TabStrip $height={29}>
                        <DocTab $active>Untitled-1 @ 66,7% (RGB/8#) *<Cross /></DocTab>
                    </TabStrip>
                    <CanvasRow>
                        <Canvas><Artwork /></Canvas>
                        <ScrollTrack />
                    </CanvasRow>
                    <StatusBar>
                        <Zoom>66,67%</Zoom>
                        <DocInfo>
                            Doc: 3,75M/1,08M
                            <Icon w={6} h={10}><path d="m1 .5 3.500 4.500L1 9.500" /></Icon>
                        </DocInfo>
                    </StatusBar>
                </Document>
                <SideDock>
                    <SideHeader><DoubleArrow left /><DoubleArrow /></SideHeader>
                    <SideBody>
                        <IconStrip>
                            {stripIcons.map(icon => (
                                <StripButton key={icon.name} aria-label={icon.name}>
                                    <Grip />
                                    <Icon size={21}>{icon.art}</Icon>
                                </StripButton>
                            ))}
                        </IconStrip>
                        <Panels>
                            <ColorPanel>
                                <TabStrip>
                                    <Tab $active>Color</Tab>
                                    <Tab>Swatches</Tab>
                                    <PanelMenu aria-label="Color menu"><Burger /></PanelMenu>
                                </TabStrip>
                                <ColorBody>
                                    <ColorPair $margin="6px 0 0">
                                        <ColorWell $back $color="#f00" aria-label="Background color" />
                                        <ColorWell $color="#1d1d1b" aria-label="Foreground color" />
                                    </ColorPair>
                                    <ColorSliders />
                                </ColorBody>
                                <Spectrum />
                            </ColorPanel>
                            <Libraries />
                            <ChannelsDock />
                        </Panels>
                    </SideBody>
                </SideDock>
            </Workspace>
            <Taskbar>
                <StartButton aria-label="Start">
                    <Icon size={38} stroke="none">
                        <circle cx="19" cy="19" r="18.500" fill="url(#orb)" stroke="#5c7890" />
                        <path d="M10 12c3-2 5-2 8-.5l-1.500 7c-3-1.500-5-1.500-8 .5z" fill="#e8602c" />
                        <path d="M19.500 12c3 1.500 6 1.500 9-.5l-2 7c-3 2-5.500 2-8.500.5z" fill="#8cc63f" />
                        <path d="M8 20.500c3-2 5-2 8-.5l-2 7c-3-1.500-5-1.500-8 .5z" fill="#3a9ae0" />
                        <path d="M17.500 20.500c3 1.500 5.500 1.500 8.500-.5l-2 7c-3 2-5.500 2-8.500.5z" fill="#fbc92f" />
                        <path d="M3 16a16.500 16.500 0 0 1 32 0C25 12 13 12 3 16z" fill="#fff" fillOpacity=".22" />
                    </Icon>
                </StartButton>
                {taskIcons.map(task => (
                    <TaskButton key={task.name} aria-label={task.name} $state={task.state} $stacked={task.stacked}>
                        {task.art}
                    </TaskButton>
                ))}
                <Tray>
                    {trayIcons.map(icon => <Icon key={icon.name} size={16}>{icon.art}</Icon>)}
                    <Clock>14:18<br />07.10.2019</Clock>
                    <ShowDesktop aria-label="Show desktop" />
                </Tray>
            </Taskbar>
        </Window>
    );
}
